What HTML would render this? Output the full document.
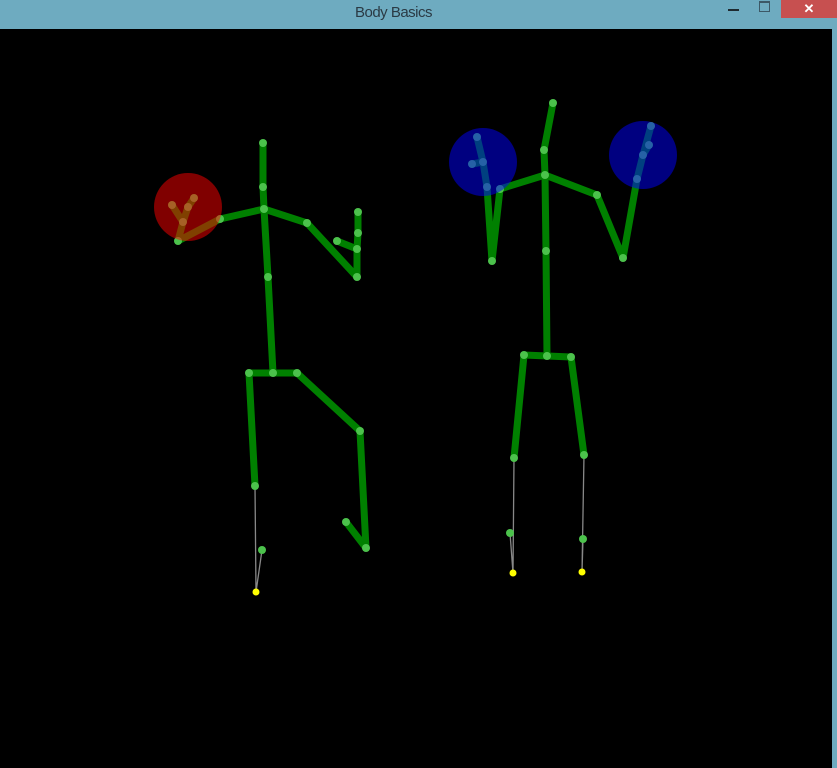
<!DOCTYPE html>
<html><head><meta charset="utf-8"><style>
html,body{margin:0;padding:0;width:837px;height:768px;overflow:hidden;background:#6eabc0;}
.title{position:absolute;left:0;top:0;width:837px;height:29px;background:#6eabc0;}
.title span{position:absolute;left:0;width:787px;text-align:center;top:4px;font:15px "Liberation Sans",sans-serif;color:#2a3a44;letter-spacing:-0.5px;}
.close{position:absolute;left:781px;top:0;width:56px;height:18px;background:#c75050;color:#fff;text-align:center;font:bold 13px "Liberation Sans",sans-serif;line-height:17px;}
.min{position:absolute;left:728px;top:9px;width:11px;height:2px;background:#1e2a30;}
.max{position:absolute;left:759px;top:1px;width:9px;height:8px;border:1px solid #3c5866;border-top-width:2px;}
svg{position:absolute;left:0;top:29px;}
</style></head><body>
<div class="title"><span>Body Basics</span><div class="min"></div><div class="max"></div><div class="close">✕</div></div>
<svg width="832" height="739" viewBox="0 29 832 739">
<rect x="0" y="29" width="832" height="739" fill="#000"/>
<g stroke="#008000" stroke-width="7" stroke-linecap="round" stroke-linejoin="round" fill="none">
<polyline points="263,143 263,187 264,209 268,277 273,373"/>
<polyline points="249,373 297,373"/>
<polyline points="264,209 220,219 178,241 183,222 188,207 194,198"/>
<polyline points="183,222 172,205"/>
<polyline points="264,209 307,223 357,277 357,249 358,233 358,212"/>
<polyline points="357,249 337,241"/>
<polyline points="249,373 255,486"/>
<polyline points="297,373 360,431 366,548 346,522"/>
<polyline points="553,103 544,150 545,175 546,251 547,356"/>
<polyline points="524,355 571,357"/>
<polyline points="524,355 514,458"/>
<polyline points="571,357 584,455"/>
<polyline points="545,175 500,189 492,261 487,187 483,162 477,137"/>
<polyline points="483,162 472,164"/>
<polyline points="545,175 597,195 623,258 637,179 643,155 651,126"/>
<polyline points="643,155 649,145"/>
</g>
<g stroke="#888" stroke-width="1.3" fill="none">
<polyline points="255,486 256,592 262,550"/>
<polyline points="514,458 513,573 510,533"/>
<polyline points="584,455 582,572 583,539"/>
</g>
<g fill="#4cc24c">
<circle cx="263" cy="143" r="4"/><circle cx="263" cy="187" r="4"/><circle cx="264" cy="209" r="4"/><circle cx="268" cy="277" r="4"/><circle cx="273" cy="373" r="4"/><circle cx="249" cy="373" r="4"/><circle cx="297" cy="373" r="4"/>
<circle cx="220" cy="219" r="4"/><circle cx="178" cy="241" r="4"/><circle cx="183" cy="222" r="4"/><circle cx="188" cy="207" r="4"/><circle cx="194" cy="198" r="4"/><circle cx="172" cy="205" r="4"/>
<circle cx="307" cy="223" r="4"/><circle cx="357" cy="277" r="4"/><circle cx="357" cy="249" r="4"/><circle cx="358" cy="233" r="4"/><circle cx="358" cy="212" r="4"/><circle cx="337" cy="241" r="4"/>
<circle cx="255" cy="486" r="4"/><circle cx="262" cy="550" r="4"/><circle cx="360" cy="431" r="4"/><circle cx="366" cy="548" r="4"/><circle cx="346" cy="522" r="4"/>
<circle cx="553" cy="103" r="4"/><circle cx="544" cy="150" r="4"/><circle cx="545" cy="175" r="4"/><circle cx="546" cy="251" r="4"/><circle cx="547" cy="356" r="4"/><circle cx="524" cy="355" r="4"/><circle cx="571" cy="357" r="4"/>
<circle cx="514" cy="458" r="4"/><circle cx="584" cy="455" r="4"/><circle cx="510" cy="533" r="4"/><circle cx="583" cy="539" r="4"/>
<circle cx="500" cy="189" r="4"/><circle cx="492" cy="261" r="4"/><circle cx="487" cy="187" r="4"/><circle cx="483" cy="162" r="4"/><circle cx="477" cy="137" r="4"/><circle cx="472" cy="164" r="4"/>
<circle cx="597" cy="195" r="4"/><circle cx="623" cy="258" r="4"/><circle cx="637" cy="179" r="4"/><circle cx="643" cy="155" r="4"/><circle cx="651" cy="126" r="4"/><circle cx="649" cy="145" r="4"/>
</g>
<g fill="#ffff00">
<circle cx="256" cy="592" r="3.5"/><circle cx="513" cy="573" r="3.5"/><circle cx="582" cy="572" r="3.5"/>
</g>
<circle cx="188" cy="207" r="34" fill="rgba(255,0,0,0.5)"/>
<circle cx="483" cy="162" r="34" fill="rgba(0,0,255,0.5)"/>
<circle cx="643" cy="155" r="34" fill="rgba(0,0,255,0.5)"/>
</svg>
</body></html>
